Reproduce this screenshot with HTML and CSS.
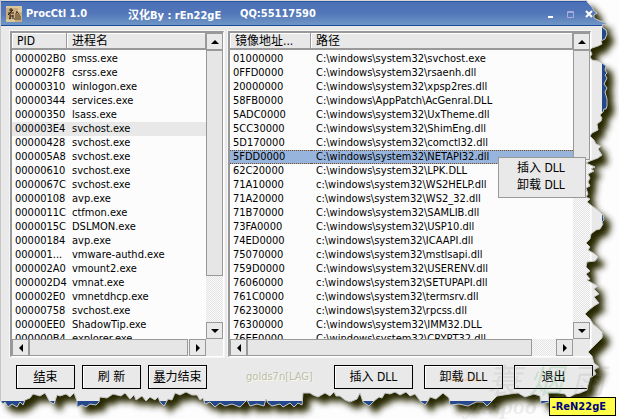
FILE: index.html
```html
<!DOCTYPE html>
<html lang="zh-CN">
<head>
    <meta charset="UTF-8">
    <meta name="viewport" content="width=device-width, initial-scale=1.0">
    <title>ProcCtl 1.0</title>
    <link rel="stylesheet" href="styles.css">
</head>
<body>
    <div class="window">
        <header class="titlebar">
            <svg class="app-icon" viewBox="0 0 16 16" aria-hidden="true">
                <rect width="16" height="16" fill="#c9ad80"/>
                <path d="M0 0h16v2H0zM12 2h4v4h-4zM0 13h9v3H0z" fill="#dcc79c"/>
                <path d="M3 4h4M5 2v4M2 7h6M7 4L2 9M4 8v5M4 10h3M3 13l2-1M7 9v4" fill="none" stroke="#2c1f12"/>
                <path d="M11 5l-1 3M11 6l2 2M9 9h5M9 11h6M8 13h7" fill="none" stroke="#4a3a22"/>
            </svg>
            <h1>ProcCtl 1.0</h1>
            <span class="credit">汉化By : rEn22gE</span>
            <span class="contact">QQ:55117590</span>
            <div class="window-buttons">
                <button type="button" aria-label="最小化"><svg viewBox="0 0 10 10"><path d="M2 7h5v2H2z" fill="#fff"/></svg></button>
                <button type="button" aria-label="最大化" disabled><svg viewBox="0 0 10 10"><path d="M2.5 2.5h6v6h-6zM2 3.5h7" fill="none" stroke="#a9abdc"/></svg></button>
                <button type="button" aria-label="关闭"><svg viewBox="0 0 10 10"><path d="M2 2l6 6M8 2l-6 6" stroke="#fff" stroke-width="2"/></svg></button>
            </div>
        </header>

        <main class="panes">
            <section class="pane pane-process">
                <div class="view">
                    <table>
                        <thead><tr><th class="col-pid">PID</th><th>进程名</th></tr></thead>
                        <tbody id="processes"></tbody>
                    </table>
                </div>
                <div class="scroll-y">
                    <button type="button" aria-label="向上"><svg viewBox="0 0 8 8"><path d="M0 6l4-4 4 4z"/></svg></button>
                    <div class="thumb thumb-process"></div>
                    <button type="button" class="last" aria-label="向下"><svg viewBox="0 0 8 8"><path d="M0 2l4 4 4-4z"/></svg></button>
                </div>
                <div class="scroll-x">
                    <button type="button" aria-label="向左"><svg viewBox="0 0 8 8"><path d="M6 0L2 4l4 4z"/></svg></button>
                    <div class="thumb thumb-full"></div>
                    <button type="button" class="last" aria-label="向右"><svg viewBox="0 0 8 8"><path d="M2 0l4 4-4 4z"/></svg></button>
                </div>
            </section>

            <section class="pane pane-module">
                <div class="view">
                    <table>
                        <thead><tr><th class="col-base">镜像地址...</th><th>路径</th></tr></thead>
                        <tbody id="modules"></tbody>
                    </table>
                </div>
                <div class="scroll-y">
                    <button type="button" aria-label="向上"><svg viewBox="0 0 8 8"><path d="M0 6l4-4 4 4z"/></svg></button>
                    <div class="thumb thumb-module"></div>
                    <button type="button" class="last" aria-label="向下"><svg viewBox="0 0 8 8"><path d="M0 2l4 4 4-4z"/></svg></button>
                </div>
                <div class="scroll-x">
                    <button type="button" aria-label="向左"><svg viewBox="0 0 8 8"><path d="M6 0L2 4l4 4z"/></svg></button>
                    <div class="thumb thumb-path"></div>
                    <button type="button" class="last" aria-label="向右"><svg viewBox="0 0 8 8"><path d="M2 0l4 4-4 4z"/></svg></button>
                </div>
            </section>
        </main>

        <footer class="actions">
            <div class="group">
                <button type="button"><u>结</u>束</button>
                <button type="button">刷 新</button>
                <button type="button"><u>暴</u>力结束</button>
            </div>
            <span class="author">golds7n[LAG]</span>
            <div class="group group-dll">
                <button type="button">插入 DLL</button>
                <button type="button">卸载 DLL</button>
                <button type="button">退出</button>
            </div>
        </footer>
    </div>

    <!-- torn paper edge with its shadow -->
    <svg class="torn" viewBox="0 0 619 419" preserveAspectRatio="none" aria-hidden="true">
        <defs>
            <path id="sheet" d=""/>
            <clipPath id="outside"><path id="outside-path" clip-rule="evenodd" d=""/></clipPath>
            <filter id="soft" x="-10%" y="-10%" width="120%" height="120%"><feGaussianBlur stdDeviation="3"/></filter>
        </defs>
        <g clip-path="url(#outside)">
            <rect width="619" height="419" fill="#fdfdfd"/>
            <use href="#sheet" transform="translate(7 7)" fill="#262600" filter="url(#soft)"/>
        </g>
        <use href="#sheet" fill="none" stroke="#c4c4c4"/>
    </svg>

    <div class="watermark" aria-hidden="true">
        <div class="brush"><span class="orange">一</span><span>蓑</span><span class="green">烟</span><span>雨</span></div>
        <div class="script">yanpoo</div>
    </div>

    <div class="menu" role="menu">
        <button type="button" role="menuitem">插入 DLL</button>
        <button type="button" role="menuitem">卸载 DLL</button>
    </div>

    <div class="badge">-ReN22gE</div>

    <script src="script.js"></script>
</body>
</html>
```
FILE: styles.css
```css
* {
    box-sizing: border-box;
}
body {
    margin: 0;
    height: 100vh;
    overflow: hidden;
    position: relative;
    background-color: #fdfdfd;
    color: #000;
    font-family: "DejaVu Sans Condensed", "Noto Sans CJK SC", sans-serif;
    font-size: 11px;
}
button {
    font: inherit;
    color: inherit;
    margin: 0;
    padding: 0;
}
.window {
    height: 100%;
    display: flex;
    flex-direction: column;
    background-color: #e9e9e9;
    border-left: 1px solid #c8c8c8;
    border-bottom: 18px solid #24488c;
}
.titlebar {
    display: flex;
    align-items: center;
    flex: 0 0 25px;
    margin-top: 1px;
    padding: 0 25px 0 5px;
    color: #fff;
    font-weight: bold;
    white-space: nowrap;
    background: linear-gradient(#4b6fb5, #5377b9 50%, #6f96c5);
    border-top: 1px solid #2858a4;
    border-bottom: 1px solid #1c4a9c;
}
.app-icon {
    width: 16px;
    height: 16px;
    margin-right: 4px;
}
.titlebar h1 {
    margin: 0;
    font-size: 11px;
    width: 102px;
}
.credit {
    width: 112px;
}
.window-buttons {
    display: flex;
    gap: 9px;
    margin-left: auto;
}
.window-buttons button {
    width: 10px;
    height: 10px;
    border: none;
    background: none;
}
.window-buttons svg {
    display: block;
}
.panes, .actions {
    border-right: 17px solid #24488c;
}
.panes {
    flex: 1;
    min-height: 0;
    display: flex;
    gap: 4px;
    padding: 5px 11px 0 9px;
}
.pane {
    display: grid;
    grid-template-columns: 1fr 17px;
    grid-template-rows: 1fr 17px;
    min-width: 0;
    border: 2px solid #999;
    border-right: 1px solid #fff;
    border-bottom: 1px solid #fff;
    outline: 1px solid #f6f6f6;
}
.pane-process {
    flex: 0 0 214px;
}
.pane-module {
    flex: 1;
}
.view {
    overflow: hidden;
    background-color: #fcfcfc;
}
.view table {
    width: 100%;
    table-layout: fixed;
    border-collapse: separate;
    border-spacing: 0;
}
.view th {
    height: 17px;
    padding: 0 5px;
    font-weight: normal;
    font-size: 12px;
    line-height: 14px;
    text-align: left;
    white-space: nowrap;
    background-color: #e8e8e8;
    border: 1px solid #999;
    border-width: 0 1px 2px 0;
    box-shadow: inset 1px 1px 0 #fff;
}
.view td {
    height: 14px;
    padding: 0 3px;
    line-height: 14px;
    white-space: nowrap;
}
.view td + td {
    padding-left: 5px;
}
.view tbody::before {
    content: "";
    display: block;
    height: 2px;
}
.col-pid {
    width: 55px;
}
.col-base {
    width: 81px;
}
.current td {
    background-color: #e8e8e8;
}
.selected td {
    background-color: #96b4dc;
    border: 1px dotted #7a4a20;
    border-width: 1px 0;
    line-height: 12px;
}
.scroll-y, .scroll-x {
    display: flex;
    background: repeating-conic-gradient(#e4e4e4 0 25%, #fafafa 0 50%) 0 0 / 2px 2px;
}
.scroll-y {
    flex-direction: column;
}
.scroll-y button, .scroll-x button {
    flex: 0 0 17px;
    display: flex;
    align-items: center;
    justify-content: center;
    background-color: #e9e9e9;
    border: 1px solid #999;
}
.scroll-y svg, .scroll-x svg {
    width: 8px;
    height: 8px;
}
.last {
    margin-top: auto;
}
.scroll-x .last {
    margin-top: 0;
    margin-left: auto;
}
.thumb {
    background-color: #e6e6e6;
    border: 1px solid #999;
}
.thumb-process {
    flex: 0 0 78%;
    max-height: calc(100% - 80px);
}
.thumb-module {
    flex: 0 0 36%;
}
.thumb-full {
    flex: 1;
    margin-right: 1px;
}
.thumb-path {
    flex: 0 0 83%;
}
.actions {
    flex: 0 0 44px;
    display: flex;
    padding: 8px 9px 0 15px;
}
.group {
    display: flex;
    gap: 7px;
}
.group-dll {
    gap: 11px;
}
.group button {
    width: 59px;
    height: 24px;
    font-size: 12px;
    line-height: 20px;
    background-color: #e9e9e9;
    border: 1px solid #000;
    box-shadow: inset 1px 1px 0 #fff;
}
.group-dll button {
    width: 79px;
}
.author {
    flex: 1;
    padding-left: 18px;
    line-height: 24px;
    text-align: center;
    color: #bdbdb0;
    text-shadow: 1px 1px 0 #fbfbe8;
}
.torn {
    position: absolute;
    inset: 0;
    width: 100%;
    height: 100%;
    pointer-events: none;
}
.watermark {
    position: absolute;
    right: 14px;
    bottom: 4px;
    color: #888;
    opacity: 0.14;
    pointer-events: none;
}
.brush {
    display: flex;
    gap: 8px;
    font-family: "Noto Sans CJK SC", sans-serif;
    font-style: italic;
    font-size: 34px;
    line-height: 36px;
}
.orange {
    color: #f08000;
}
.green {
    color: #20a040;
}
.script {
    font: italic bold 24px/18px "Liberation Serif", serif;
    padding-left: 20px;
}
.menu {
    position: absolute;
    top: 157px;
    right: 33px;
    width: 88px;
    padding: 2px 0 3px;
    background-color: #e9e9e9;
    border: 1px solid #999;
}
.menu button {
    display: block;
    width: 100%;
    height: 17px;
    padding-left: 18px;
    border: none;
    background: none;
    font-size: 12px;
    line-height: 17px;
    text-align: left;
}
.badge {
    position: absolute;
    right: 3px;
    bottom: 3px;
    padding: 0 9px 0 2px;
    background-color: #ffff48;
    border: 1px solid #000;
    color: #000080;
    font-weight: bold;
    line-height: 17px;
}
```
FILE: script.js
```js
const processes = [
    ['000002B0', 'smss.exe'],
    ['000002F8', 'csrss.exe'],
    ['00000310', 'winlogon.exe'],
    ['00000344', 'services.exe'],
    ['00000350', 'lsass.exe'],
    ['000003E4', 'svchost.exe', 'current'],
    ['00000428', 'svchost.exe'],
    ['000005A8', 'svchost.exe'],
    ['00000610', 'svchost.exe'],
    ['0000067C', 'svchost.exe'],
    ['00000108', 'avp.exe'],
    ['0000011C', 'ctfmon.exe'],
    ['0000015C', 'DSLMON.exe'],
    ['00000184', 'avp.exe'],
    ['000001...', 'vmware-authd.exe'],
    ['000002A0', 'vmount2.exe'],
    ['000002D4', 'vmnat.exe'],
    ['000002E0', 'vmnetdhcp.exe'],
    ['00000758', 'svchost.exe'],
    ['00000EE0', 'ShadowTip.exe'],
    ['000000B4', 'explorer.exe']
];

const modules = [
    ['01000000', 'C:\\windows\\system32\\svchost.exe'],
    ['0FFD0000', 'C:\\windows\\system32\\rsaenh.dll'],
    ['20000000', 'C:\\windows\\system32\\xpsp2res.dll'],
    ['58FB0000', 'C:\\windows\\AppPatch\\AcGenral.DLL'],
    ['5ADC0000', 'C:\\windows\\system32\\UxTheme.dll'],
    ['5CC30000', 'C:\\windows\\system32\\ShimEng.dll'],
    ['5D170000', 'C:\\windows\\system32\\comctl32.dll'],
    ['5FDD0000', 'C:\\windows\\system32\\NETAPI32.dll', 'selected'],
    ['62C20000', 'C:\\windows\\system32\\LPK.DLL'],
    ['71A10000', 'c:\\windows\\system32\\WS2HELP.dll'],
    ['71A20000', 'c:\\windows\\system32\\WS2_32.dll'],
    ['71B70000', 'C:\\windows\\system32\\SAMLIB.dll'],
    ['73FA0000', 'C:\\windows\\system32\\USP10.dll'],
    ['74ED0000', 'c:\\windows\\system32\\ICAAPI.dll'],
    ['75070000', 'c:\\windows\\system32\\mstlsapi.dll'],
    ['759D0000', 'C:\\windows\\system32\\USERENV.dll'],
    ['76060000', 'c:\\windows\\system32\\SETUPAPI.dll'],
    ['761C0000', 'c:\\windows\\system32\\termsrv.dll'],
    ['76230000', 'c:\\windows\\system32\\rpcss.dll'],
    ['76300000', 'C:\\windows\\system32\\IMM32.DLL'],
    ['76EE0000', 'C:\\windows\\system32\\CRYPT32.dll']
];

function fillTable(id, rows) {
    const body = document.getElementById(id);
    rows.forEach(([first, second, state]) => {
        const row = body.insertRow();
        if (state) {
            row.className = state;
        }
        row.insertCell().textContent = first;
        row.insertCell().textContent = second;
    });
}

fillTable('processes', processes);
fillTable('modules', modules);

// outline of the torn edge: down the right side, then back along the bottom
const right = '586,0 588,3 590,5 592,7 594,11 597,13 594,15 594,18 600,21 606,23 606,24 602,25 603,28 606,30 607,34 605,39 601,41 602,44 598,46 592,48 590,50 592,54 590,57 592,60 598,61 602,63 606,66 605,70 607,73 605,75 607,78 604,84 607,88 605,92 607,99 607,106 606,109 604,109 603,112 600,115 602,118 601,121 597,124 598,130 592,133 590,136 594,140 596,144 601,146 598,149 602,155 598,158 590,161 586,163 595,167 591,169 594,171 588,174 590,178 588,182 590,186 586,188 588,194 586,197 590,199 587,202 592,206 598,210 603,215 604,220 602,222 603,224 600,229 596,230 591,234 590,239 586,243 590,247 588,250 595,254 598,257 595,261 587,262 586,267 590,271 586,274 590,279 587,280 592,283 598,286 594,289 599,294 594,297 599,303 594,306 589,310 585,314 590,319 593,324 598,328 603,333 602,338 599,341 595,345 588,352 592,356 594,363 599,367 594,370 596,374 590,378 588,385 587,390 580,393';
const bottom = '575,394 568,398 565,394 558,393 548,393 549,402 541,404 540,396 534,394 525,397 518,393 510,394 497,396 492,401 487,406 483,402 476,402 468,406 459,404 450,405 449,398 443,393 436,399 430,397 428,401 425,405 421,402 415,394 410,396 406,392 400,395 395,392 390,394 385,393 382,398 379,397 374,401 369,406 363,402 360,393 357,399 350,402 345,400 340,396 336,396 334,392 330,396 325,393 318,397 313,395 310,393 303,393 302,405 298,403 294,407 290,403 283,407 280,404 272,406 268,403 266,399 264,406 257,404 250,406 247,400 244,403 240,407 232,404 225,406 220,403 215,407 210,402 205,404 203,398 200,400 197,395 192,395 186,392 180,395 175,393 172,400 168,399 164,406 160,402 158,397 155,400 150,397 146,401 142,396 136,400 134,395 130,399 125,393 121,396 113,394 107,398 100,397 99,402 96,405 90,404 86,407 82,405 77,407 77,401 74,393 70,397 66,394 60,396 57,395 54,404 50,402 45,393 40,396 33,394 30,398 25,400 23,405 20,402 17,407 12,404 8,407 5,402 3,404 0,400';
const sheet = 'M0,0 L' + right + ' ' + bottom + 'Z';
document.getElementById('sheet').setAttribute('d', sheet);
document.getElementById('outside-path').setAttribute('d', 'M0,0H619V419H0Z' + sheet);
```
